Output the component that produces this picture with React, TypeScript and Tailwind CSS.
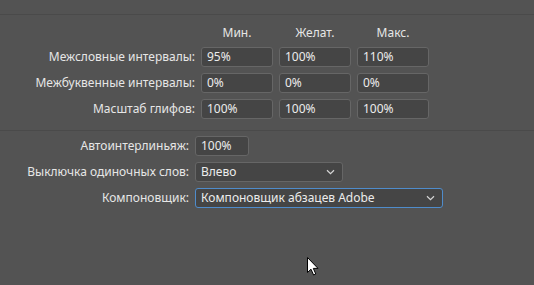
import React from 'react';

const rows = [
  { label: 'Межсловные интервалы:', values: ['95%', '100%', '110%'] },
  { label: 'Межбуквенные интервалы:', values: ['0%', '0%', '0%'] },
  { label: 'Масштаб глифов:', values: ['100%', '100%', '100%'] },
];

const Chevron = () => (
  <svg width="9" height="6" viewBox="0 0 9 6" className="shrink-0">
    <path d="M1 1.2 L4.5 4.6 L8 1.2" fill="none" stroke="#d6d6d6" strokeWidth="1.2" />
  </svg>
);

const Field = ({ value, className = '' }: { value: string; className?: string }) => (
  <div
    className={`h-[20px] rounded-[3px] border border-[#666666] bg-[#454545] px-[5px] text-[12px] leading-[18px] text-[#ececec] ${className}`}
  >
    {value}
  </div>
);

const Select = ({ value, width, focused }: { value: string; width: string; focused?: boolean }) => (
  <div
    className={`flex h-[20px] items-center justify-between rounded-[3px] border bg-[#454545] pl-[5px] pr-[7px] text-[12px] text-[#ececec] ${width} ${
      focused ? 'border-[#4f8ccb]' : 'border-[#666666]'
    }`}
  >
    <span className="leading-[18px]">{value}</span>
    <Chevron />
  </div>
);

export default function App() {
  return (
    <div
      className="relative h-[285px] w-[534px] overflow-hidden bg-[#535353] text-[12px] text-[#e6e6e6]"
      style={{ fontFamily: '"Noto Sans", "Open Sans", sans-serif' }}
    >
      <div className="h-[15px] border-b border-[#4a4a4a]" />

      <div className="grid grid-cols-[195px_72px_72px_72px] gap-x-[6px] gap-y-[6px] pt-[10px]">
        <div />
        <div className="text-center leading-[16px]">Мин.</div>
        <div className="text-center leading-[16px]">Желат.</div>
        <div className="text-center leading-[16px]">Макс.</div>
        {rows.map((r) => (
          <React.Fragment key={r.label}>
            <div className="text-right leading-[20px]">{r.label}</div>
            {r.values.map((v, i) => (
              <Field key={i} value={v} />
            ))}
          </React.Fragment>
        ))}
      </div>

      <div className="mt-[11px] border-t border-[#4a4a4a]" />

      <div className="grid grid-cols-[189px_auto] justify-start gap-x-[6px] gap-y-[6px] pt-[5px]">
        <div className="text-right leading-[20px]">Автоинтерлиньяж:</div>
        <Field value="100%" className="w-[54px]" />
        <div className="text-right leading-[20px]">Выключка одиночных слов:</div>
        <Select value="Влево" width="w-[148px]" />
        <div className="text-right leading-[20px]">Компоновщик:</div>
        <Select value="Компоновщик абзацев Adobe" width="w-[248px]" focused />
      </div>

      <svg
        className="absolute left-[307px] top-[257px]"
        width="13"
        height="19"
        viewBox="0 0 13 19"
      >
        <path
          d="M0.5 0.5 L0.5 15.5 L4 12.2 L6.6 18 L8.8 17 L6.3 11.4 L11 11.4 Z"
          fill="#ffffff"
          stroke="#000000"
          strokeWidth="1"
          strokeLinejoin="round"
        />
      </svg>
    </div>
  );
}
